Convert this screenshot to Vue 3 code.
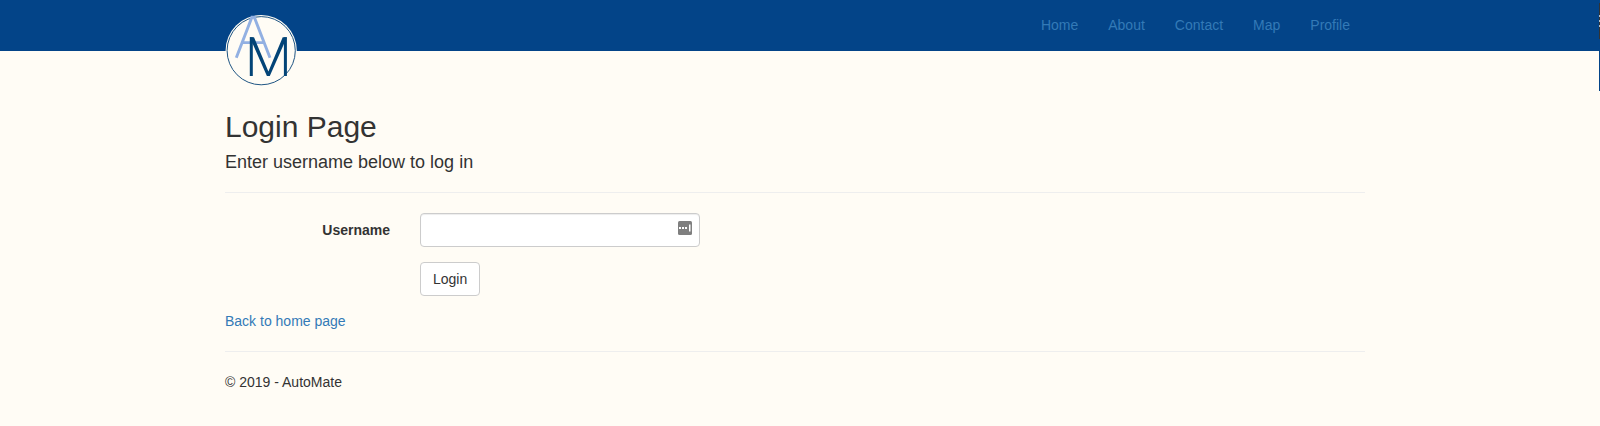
<script setup>
const links = ['Home', 'About', 'Contact', 'Map', 'Profile']
</script>

<template>
  <div class="page">
    <header class="navbar">
      <div class="container nav-inner">
        <a class="brand" aria-label="AutoMate">
          <svg width="72" height="72" viewBox="0 0 72 72" fill="none">
            <circle cx="36.2" cy="35.7" r="35.6" fill="#fffcf5" />
            <circle cx="36.2" cy="35.7" r="34.1" stroke="#1f5583" stroke-width="1" />
            <path d="M11.3 42.8 L26.9 2.2 H29.3 L45 42.8 M16.8 27.6 H39.5" stroke="#92b0e2" stroke-width="2.9" />
            <path d="M26.3 61 V22.3 M60.4 61 V22.3" stroke="#034477" stroke-width="3" />
            <path d="M24.8 22.3 H29 L43.4 56.6 L57.7 22.3 H61.9 L44.8 61 H41.9 Z" fill="#034477" />
          </svg>
        </a>
        <nav class="nav">
          <a v-for="link in links" :key="link">{{ link }}</a>
        </nav>
      </div>
      <div class="edge"><i></i><i></i><i></i></div>
    </header>
    <main class="container content">
      <h2>Login Page</h2>
      <h4>Enter username below to log in</h4>
      <hr />
      <form @submit.prevent>
        <div class="group">
          <label for="username">Username</label>
          <div class="field">
            <input id="username" type="text" />
            <svg class="manager" width="14" height="14" viewBox="0 0 14 14">
              <rect width="14" height="14" rx="1.5" fill="#7f7f7f" />
              <path d="M1 6h2v2h-2z M4 6h2v2h-2z M7 6h2v2h-2z M11 3.5h1.5v7h-1.5z" fill="#fff" />
            </svg>
          </div>
        </div>
        <div class="group">
          <button type="submit">Login</button>
        </div>
      </form>
      <div><a class="back">Back to home page</a></div>
      <hr />
      <footer>© 2019 - AutoMate</footer>
    </main>
  </div>
</template>

<style>
body {
  background: #fffcf5;
}
</style>

<style scoped>
* {
  box-sizing: border-box;
}
.page {
  height: 426px;
  overflow: hidden;
  background: #fffcf5;
  color: #333;
  font: 14px/20px "Liberation Sans", Arial, sans-serif;
}
.container {
  width: 1170px;
  margin: 0 0 0 210px;
  padding: 0 15px;
}
.navbar {
  position: relative;
  display: flow-root;
  height: 51px;
  background: #034488;
}
.nav-inner {
  display: flex;
  justify-content: space-between;
}
.brand {
  height: 72px;
  margin-top: 15px;
}
.brand svg {
  display: block;
}
.nav {
  display: flex;
}
.nav a {
  padding: 15px;
  color: #337ab7;
}
.edge {
  position: absolute;
  top: 0;
  right: 0;
  width: 1px;
  height: 91px;
  padding-top: 12px;
  background: linear-gradient(#034488 3px, #333 3px, #333 39px, #034488 39px);
}
.edge i {
  display: block;
  height: 2px;
  margin-top: 3px;
  background: #b5bcc4;
}
.content {
  padding-top: 59px;
}
h2,
h4 {
  margin: 0 0 10px;
  font-weight: 500;
}
h2 {
  font-size: 30px;
  line-height: 33px;
}
h4 {
  font-size: 18px;
  line-height: 19px;
}
hr {
  height: 1px;
  margin: 20px 0;
  border: 0;
  background: #eee;
}
.group {
  display: grid;
  grid-template-columns: 165px 280px;
  column-gap: 30px;
  margin-bottom: 15px;
}
label {
  padding-top: 7px;
  font-weight: bold;
  text-align: right;
}
.field {
  position: relative;
}
input {
  display: block;
  width: 280px;
  height: 34px;
  padding: 6px 12px;
  border: 1px solid #ccc;
  border-radius: 4px;
  background: #fff;
  box-shadow: inset 0 1px 1px rgba(0, 0, 0, 0.075);
  font: inherit;
}
.manager {
  position: absolute;
  top: 8px;
  right: 8px;
}
button {
  grid-column: 2;
  justify-self: start;
  height: 34px;
  padding: 6px 12px;
  border: 1px solid #ccc;
  border-radius: 4px;
  background: #fff;
  color: #333;
  font: inherit;
}
.back {
  color: #337ab7;
}
</style>
